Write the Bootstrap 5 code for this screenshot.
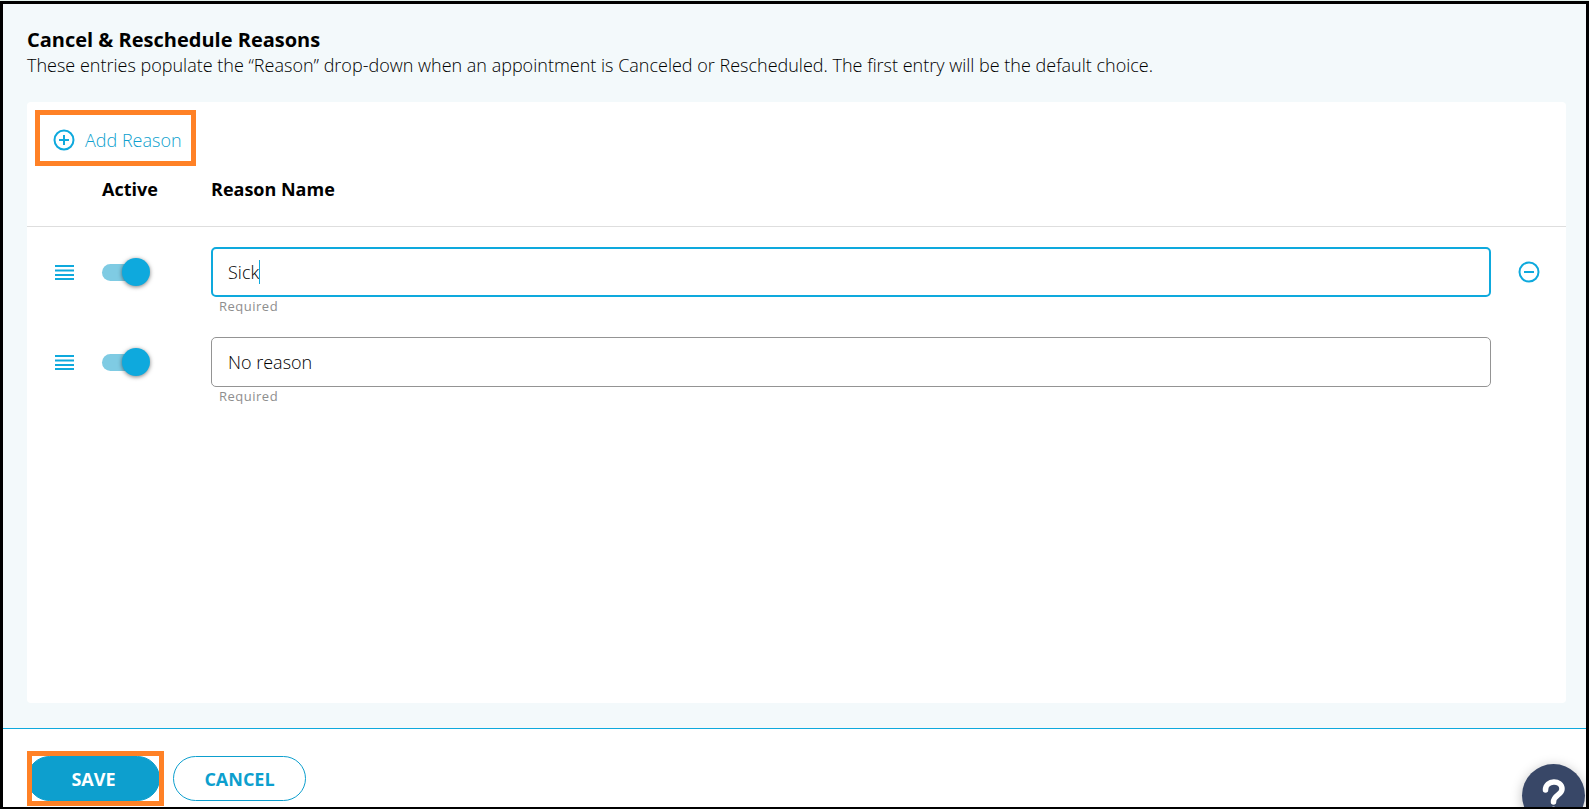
<!DOCTYPE html>
<html lang="en">
<head>
<meta charset="utf-8">
<meta name="viewport" content="width=device-width, initial-scale=1">
<title>Cancel &amp; Reschedule Reasons</title>
<link href="https://cdn.jsdelivr.net/npm/bootstrap@5.3.0/dist/css/bootstrap.min.css" rel="stylesheet">
<style>
  :root { --accent: #0ea9dd; --accent-dark: #0d9fce; --callout: #ff8126; --page: #f3f9fb; }
  body { font-family: "Open Sans", "Noto Sans", sans-serif; font-size: 18px; line-height: 26px; color: #000; background: #e4f1ec; padding-top: 1px; }
  .app-frame { min-height: calc(100vh - 1px); border: 3px solid #000; border-bottom-width: 2px; background: var(--page); }
  .settings { padding: 24px 20px 25px 24px; }
  .settings h1 { font-size: 20px; line-height: 24px; }
  .intro, .entry-text, .add-reason { font-weight: 300; }
  .panel { margin-top: 24px; border-radius: 4px; }
  .callout-box { border: 5px solid var(--callout); }
  .add-box { margin: 8px 0 0 8px; }
  .add-reason { color: var(--accent-dark); padding: 11px 9px 7px 12px; gap: 9px; line-height: 28px; font-size: 18px; background: none; border: 0; }
  .line-icon { width: 24px; height: 24px; fill: none; stroke: var(--accent); stroke-width: 2; display: block; }
  .reasons th { padding: 10px 0 24px; line-height: 26px; font-weight: 700; border-bottom: 1px solid #dedede; }
  .reasons td { padding: 20px 0 0; vertical-align: top; }
  .reasons tr + tr td { padding-top: 15px; }
  .col-drag { width: 75px; }
  .col-active { width: 109px; }
  .col-remove { width: 75px; }
  .cell-mid { height: 50px; }
  .icon-btn { background: none; border: 0; padding: 0; }
  .toggle { appearance: none; display: block; width: 48px; height: 28px; margin: 0; position: relative; cursor: pointer; }
  .toggle::before { content: ""; position: absolute; left: 0; top: 6px; width: 40px; height: 17px; border-radius: 9px; background: #7fcbe3; }
  .toggle::after { content: ""; position: absolute; right: 0; top: 0; width: 28px; height: 28px; border-radius: 50%; background: var(--accent); box-shadow: 0 1px 4px rgba(0,0,0,.5); }
  .entry-text { display: block; width: 100%; height: 50px; border: 1px solid #949494; border-radius: 5px; padding: 0 16px; color: #000; background: #fff; outline: 0; }
  .entry-text.is-current { border: 2px solid var(--accent); padding: 0 15px; }
  .caret { position: absolute; left: 48px; top: 13px; width: 1px; height: 24px; background: var(--accent); }
  .hint { font-size: 13px; line-height: 18px; padding: 0 8px 7px; letter-spacing: .5px; color: #8e8e8e; display: block; }
  .actions { border-top: 1px solid var(--accent); padding: 27px 24px 6px; gap: 13px; }
  .pill { width: 133px; height: 45px; border-radius: 23px; border: 1px solid var(--accent-dark); color: var(--accent-dark); background: #fff; font-weight: 700; padding: 0; }
  .pill-main { background: var(--accent-dark); color: #fff; }
  .save-callout { position: absolute; inset: -5px -4px -5px 0; pointer-events: none; }
  .help { position: absolute; right: 1px; top: 35px; width: 63px; height: 63px; border: 0; border-radius: 50%; background: #384767; box-shadow: 0 2px 12px rgba(0,0,0,.25); padding: 0; }
  .help svg { display: block; margin: 0 auto; }
</style>
<script src="https://cdn.jsdelivr.net/npm/bootstrap@5.3.0/dist/js/bootstrap.bundle.min.js"></script>
</head>
<body>
<div class="app-frame d-flex flex-column overflow-hidden">
  <main class="settings flex-grow-1 d-flex flex-column">
    <h1 class="fw-bold mb-0">Cancel &amp; Reschedule Reasons</h1>
    <p class="intro mb-0">These entries populate the “Reason” drop-down when an appointment is Canceled or Rescheduled. The first entry will be the default choice.</p>
    <section class="panel bg-white flex-grow-1">
      <div class="d-flex">
        <div class="callout-box add-box">
          <button type="button" class="add-reason d-flex align-items-center">
            <svg class="line-icon" viewBox="0 0 24 24" aria-hidden="true"><circle cx="12" cy="12" r="9.5"/><path d="M12 7v10M7 12h10"/></svg>
            Add Reason
          </button>
        </div>
      </div>
      <table class="reasons w-100">
        <thead>
          <tr><th class="col-drag"></th><th class="col-active">Active</th><th>Reason Name</th><th class="col-remove"></th></tr>
        </thead>
        <tbody>
          <tr>
            <td><div class="cell-mid d-flex align-items-center justify-content-center"><button type="button" class="icon-btn" aria-label="Move Sick"><svg class="d-block" width="19" height="15" viewBox="0 0 19 15" fill="#0ea9dd"><path d="M0 0h19v2H0zM0 4.500h19v2H0zM0 9h19v2H0zM0 13h19v2H0z"/></svg></button></div></td>
            <td><div class="cell-mid d-flex align-items-center"><input class="toggle" type="checkbox" checked aria-label="Sick active"></div></td>
            <td>
              <div class="position-relative"><input id="reason1" class="entry-text is-current" type="text" value="Sick" aria-label="Reason Name"><span class="caret"></span></div>
              <label class="hint" for="reason1">Required</label>
            </td>
            <td><div class="cell-mid d-flex align-items-center justify-content-center"><button type="button" class="icon-btn" aria-label="Remove Sick"><svg class="line-icon" viewBox="0 0 24 24"><circle cx="12" cy="12" r="9.5"/><path d="M7 12h10"/></svg></button></div></td>
          </tr>
          <tr>
            <td><div class="cell-mid d-flex align-items-center justify-content-center"><button type="button" class="icon-btn" aria-label="Move No reason"><svg class="d-block" width="19" height="15" viewBox="0 0 19 15" fill="#0ea9dd"><path d="M0 0h19v2H0zM0 4.500h19v2H0zM0 9h19v2H0zM0 13h19v2H0z"/></svg></button></div></td>
            <td><div class="cell-mid d-flex align-items-center"><input class="toggle" type="checkbox" checked aria-label="No reason active"></div></td>
            <td>
              <input id="reason2" class="entry-text" type="text" value="No reason" aria-label="Reason Name">
              <label class="hint" for="reason2">Required</label>
            </td>
            <td></td>
          </tr>
        </tbody>
      </table>
    </section>
  </main>
  <footer class="actions bg-white d-flex position-relative">
    <div class="position-relative">
      <button type="button" class="pill pill-main d-block">SAVE</button>
      <span class="callout-box save-callout"></span>
    </div>
    <button type="button" class="pill">CANCEL</button>
    <button type="button" class="help" aria-label="Help"><svg width="63" height="63" viewBox="0 0 63 63" fill="none" stroke="#fff" stroke-width="5.5" stroke-linecap="round"><path d="M23.500 26C23.500 15.500 40 15.500 40 25C40 31 31.500 31 31.500 38"/><circle cx="31.500" cy="45.500" r="3" fill="#fff" stroke="none"/></svg></button>
  </footer>
</div>
</body>
</html>
